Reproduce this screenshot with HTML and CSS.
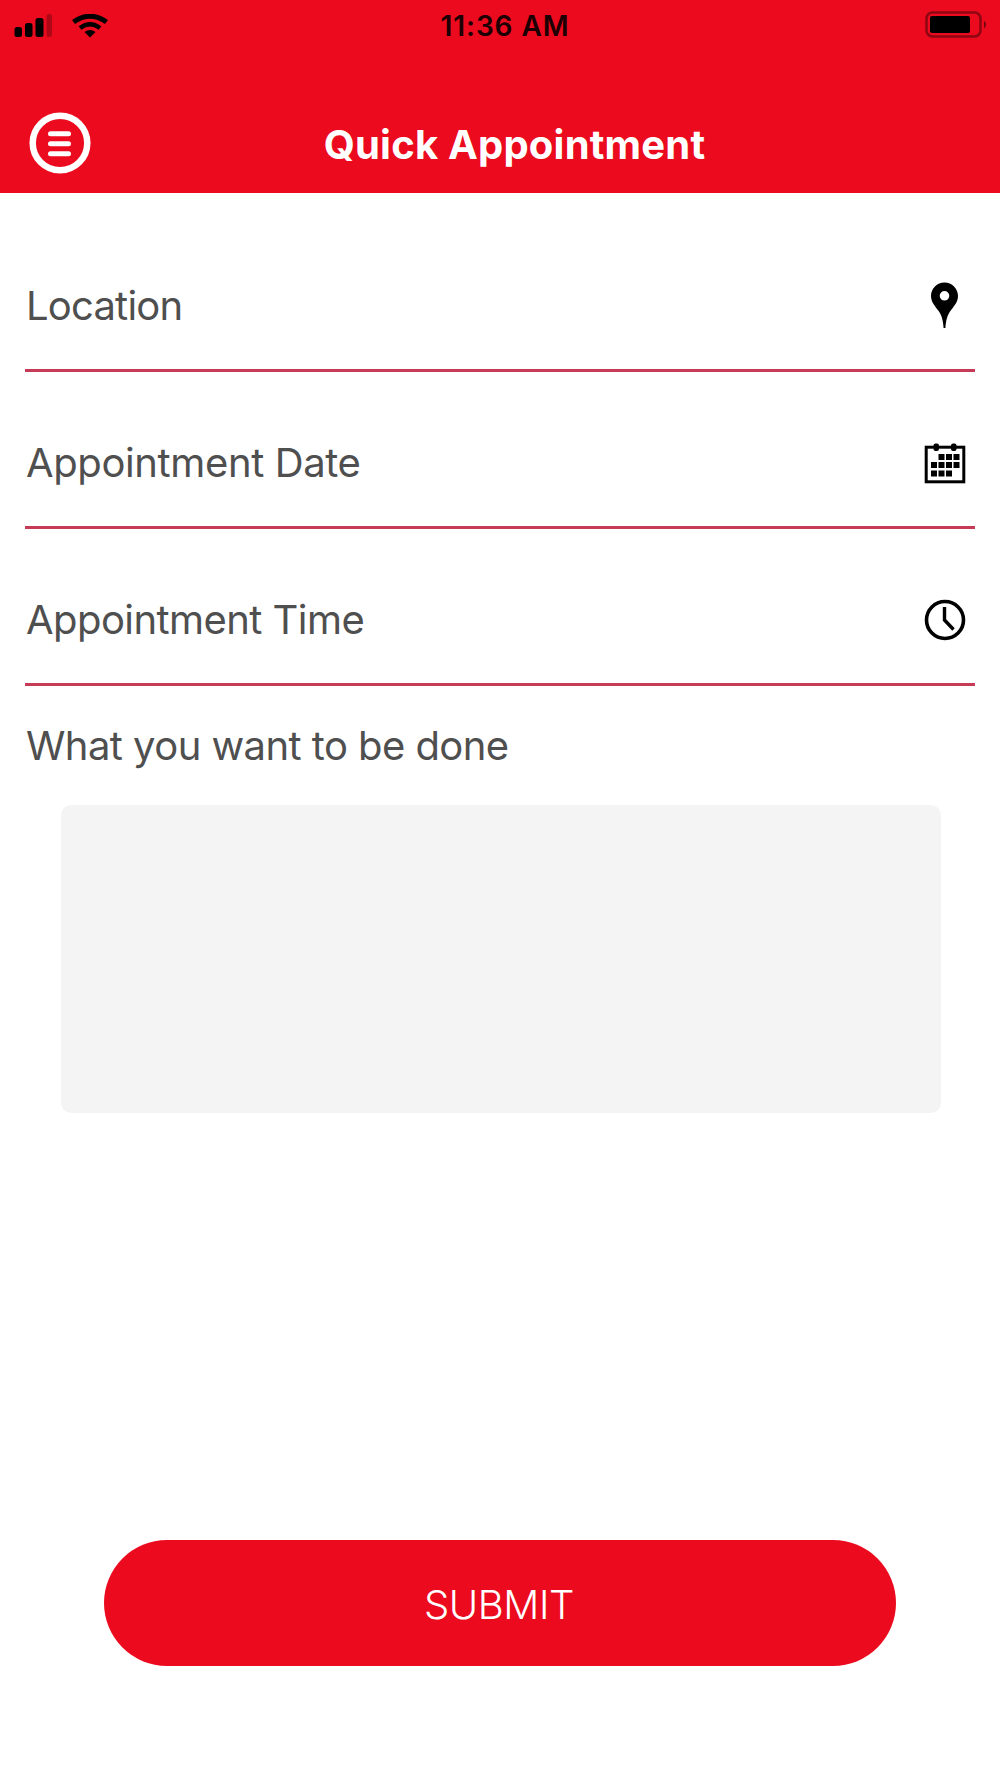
FILE: index.html
```html
<!DOCTYPE html>
<html lang="en">
<head>
    <meta charset="UTF-8">
    <meta name="viewport" content="width=device-width, initial-scale=1.0">
    <title>Quick Appointment</title>
    <link rel="stylesheet" href="styles.css">
</head>
<body>
    <header class="header">
        <div class="status-bar">
            <div class="status-left">
                <svg class="signal" width="38" height="24" viewBox="0 0 38 24">
                    <rect x="0.5" y="13" width="7.5" height="10" rx="2.5"/>
                    <rect x="11" y="9" width="7.5" height="14" rx="2.5"/>
                    <rect x="21.5" y="4" width="8" height="19" rx="2.5"/>
                    <rect x="32.5" y="0" width="5.5" height="23" rx="2.5" opacity="0.25"/>
                </svg>
                <svg class="wifi" width="36" height="24" viewBox="0 0 36 24">
                    <path d="M1.5 8Q18 -3.5 34.5 8" fill="none" stroke="#000" stroke-width="5"/>
                    <path d="M8 14Q18 6.5 28 14" fill="none" stroke="#000" stroke-width="4.5"/>
                    <path d="M12.5 18Q18 14 23.5 18L18 23.5Z"/>
                </svg>
            </div>
            <span class="status-time">11:36 AM</span>
            <div class="status-right">
                <svg class="battery" width="64" height="28" viewBox="0 0 64 28">
                    <rect x="1.5" y="1.5" width="54" height="24" rx="6" fill="none" stroke="#000" stroke-width="2.5" opacity="0.4"/>
                    <rect x="5" y="5" width="40" height="17" rx="2"/>
                    <path d="M59 9.5Q63 13.5 59 17.5Z" opacity="0.5"/>
                </svg>
            </div>
        </div>
        <div class="nav-bar">
            <button class="menu-btn" aria-label="Menu">
                <svg width="62" height="62" viewBox="0 0 62 62" fill="none" stroke="#fff">
                    <circle cx="31" cy="31" r="27.3" stroke-width="6.5"/>
                    <path d="M21.5 21.7H39.5M21.5 31.7H39.5M21.5 41.7H39.5" stroke-width="5" stroke-linecap="round"/>
                </svg>
            </button>
            <h1 class="title">Quick Appointment</h1>
        </div>
    </header>

    <main class="form">
        <div class="field">
            <span class="label label-location">Location</span>
            <svg class="icon" width="42" height="48" viewBox="0 0 42 48">
                <path fill-rule="evenodd" d="M20.5 .5C13 .5 7 6.5 7 14C7 20.500 11.5 24.5 15 29.500C18 34 19 38.500 19.600 46H21.400C22 38.500 23 34 26 29.500C29.500 24.500 34 20.500 34 14C34 6.500 28 .5 20.500 .5ZM20.500 9A4.800 4.800 0 1 1 20.500 18.600A4.800 4.800 0 1 1 20.500 9Z"/>
            </svg>
        </div>
        <div class="field">
            <span class="label label-date">Appointment Date</span>
            <svg class="icon" width="42" height="48" viewBox="0 0 42 48">
                <rect x="2.2" y="8.2" width="37.6" height="34.6" fill="none" stroke="#000" stroke-width="3"/>
                <rect x="9.5" y="4.5" width="5.5" height="7.5" rx="2"/>
                <rect x="27" y="4.500" width="5.5" height="7.5" rx="2"/>
                <path d="M14.500 15h6v6h-6zM22 15h6v6h-6zM29.500 15h6v6h-6zM7 23h6v6h-6zM14.500 23h6v6h-6zM22 23h6v6h-6zM29.500 23h6v6h-6zM7 31.500h6v6h-6zM14.500 31.500h6v6h-6zM22 31.500h6v6h-6z"/>
            </svg>
        </div>
        <div class="field">
            <span class="label">Appointment Time</span>
            <svg class="icon" width="42" height="48" viewBox="0 0 42 48" fill="none" stroke="#000">
                <circle cx="21" cy="24" r="18.5" stroke-width="3.6"/>
                <path d="M20.500 11V24L29.500 33.500" stroke-width="3.4"/>
            </svg>
        </div>

        <label class="label label-notes" for="notes">What you want to be done</label>
        <textarea class="notes" id="notes"></textarea>

        <button class="submit">SUBMIT</button>
    </main>
</body>
</html>
```
FILE: styles.css
```css
* {
    box-sizing: border-box;
}

body {
    margin: 0;
    background: #fff;
    font-family: Inter, 'Liberation Sans', sans-serif;
    color: #4f4f4f;
}

button {
    border: none;
    background: none;
    padding: 0;
    font-family: inherit;
}

svg {
    display: block;
}

.header {
    height: 193px;
    background: #eb0a1e;
}

.status-bar {
    display: grid;
    grid-template-columns: 1fr auto 1fr;
    align-items: center;
    height: 52px;
    padding: 0 11px 0 14px;
    color: #1c0003;
}

.status-left {
    display: flex;
    gap: 20px;
}

.status-right {
    display: flex;
    justify-content: flex-end;
}

.battery {
    margin-bottom: 3px;
}

.status-time {
    padding-left: 7px;
    font-size: 28px;
    font-weight: 600;
    line-height: 32px;
    letter-spacing: 0.9px;
}

.nav-bar {
    display: flex;
    align-items: center;
    height: 62px;
    margin-top: 60px;
    padding: 0 28px 0 29px;
}

.title {
    flex: 1;
    margin: 4px 34px 0 0;
    text-align: center;
    color: #fff;
    font-size: 40px;
    font-weight: 700;
    line-height: 48px;
    letter-spacing: 0.2px;
}

.form {
    display: flex;
    flex-direction: column;
    padding: 22px 25px 0;
}

.field {
    display: flex;
    justify-content: space-between;
    align-items: flex-end;
    height: 157px;
    padding: 0 9px 39px 1px;
    border-bottom: 3px solid #c63c57;
}

.label {
    font-size: 40px;
    font-weight: 400;
    line-height: 48px;
    letter-spacing: -0.56px;
}

.label-location {
    letter-spacing: -0.8px;
}

.label-date {
    letter-spacing: -0.38px;
}

.label-notes {
    margin: 36px 0 0 1px;
}

.notes {
    width: 880px;
    height: 308px;
    margin: 35px 0 0 36px;
    padding: 20px;
    border: none;
    border-radius: 10px;
    background: #f4f4f4;
    font: inherit;
    font-size: 36px;
    resize: none;
}

.submit {
    width: 792px;
    height: 126px;
    margin: 427px auto 0;
    padding: 2px 2px 0 0;
    border-radius: 63px;
    background: #eb0a1e;
    color: #fff;
    font-size: 40px;
    font-weight: 300;
    letter-spacing: -0.4px;
}
```
